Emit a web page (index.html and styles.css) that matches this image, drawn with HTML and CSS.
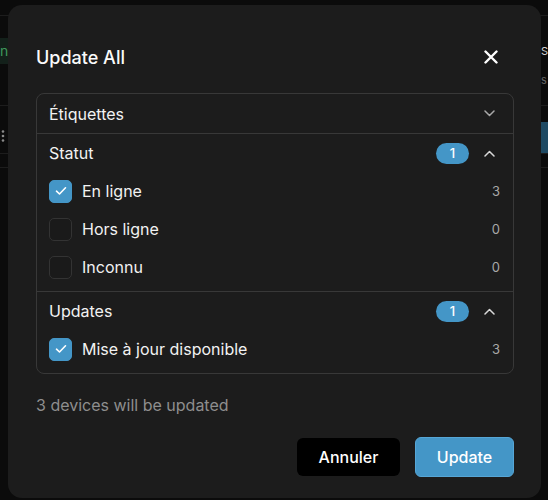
FILE: index.html
```html
<!DOCTYPE html>
<html lang="fr">
<head>
    <meta charset="UTF-8">
    <meta name="viewport" content="width=device-width, initial-scale=1.0">
    <title>Update All</title>
    <link rel="stylesheet" href="styles.css">
</head>
<body>

<!-- device table behind the dialog -->
<div class="backdrop">
    <div class="bg-row bg-row-top"></div>
    <div class="bg-row bg-row-device">
        <span class="bg-status">ne</span>
        <div class="bg-right">
            <span class="bg-name">S</span>
            <span class="bg-sub">s</span>
        </div>
    </div>
    <div class="bg-row bg-row-actions">
        <svg class="bg-kebab" width="4" height="12" viewBox="0 0 4 12">
            <circle cx="2" cy="1.5" r="1.3" fill="#8a8a8a"/>
            <circle cx="2" cy="6" r="1.3" fill="#8a8a8a"/>
            <circle cx="2" cy="10.5" r="1.3" fill="#8a8a8a"/>
        </svg>
        <span class="bg-btn"></span>
    </div>
    <div class="bg-row bg-row-thin"></div>
    <div class="bg-row bg-row-rest"></div>
</div>

<div class="modal">
    <div class="modal-header">
        <h2>Update All</h2>
        <button class="close-btn" type="button" aria-label="Fermer">
            <svg width="14" height="14" viewBox="0 0 14 14">
                <path d="M1.5 1.5 L12.5 12.5 M12.5 1.5 L1.5 12.5" stroke="#fff" stroke-width="2.4" stroke-linecap="round"/>
            </svg>
        </button>
    </div>

    <div class="filter-card">
        <div class="filter-section">
            <div class="section-head section-head-closed">
                <span class="section-title">Étiquettes</span>
                <span class="chevron">
                    <svg width="11" height="7" viewBox="0 0 11 7"><path d="M1 1 L5.5 5.5 L10 1" fill="none" stroke="#a8a8a8" stroke-width="1.5" stroke-linecap="round" stroke-linejoin="round"/></svg>
                </span>
            </div>
        </div>

        <div class="filter-section">
            <div class="section-head">
                <span class="section-title">Statut</span>
                <span class="badge">1</span>
                <span class="chevron">
                    <svg width="11" height="7" viewBox="0 0 11 7"><path d="M1 6 L5.5 1.5 L10 6" fill="none" stroke="#d8d8d8" stroke-width="1.5" stroke-linecap="round" stroke-linejoin="round"/></svg>
                </span>
            </div>
            <label class="option">
                <span class="check check-on">
                    <svg width="12" height="10" viewBox="0 0 12 10"><path d="M1.5 5.2 L4.5 8 L10.5 1.8" fill="none" stroke="#fff" stroke-width="1.6" stroke-linecap="round" stroke-linejoin="round"/></svg>
                </span>
                <span class="option-label">En ligne</span>
                <span class="option-count">3</span>
            </label>
            <label class="option">
                <span class="check"></span>
                <span class="option-label">Hors ligne</span>
                <span class="option-count">0</span>
            </label>
            <label class="option">
                <span class="check"></span>
                <span class="option-label">Inconnu</span>
                <span class="option-count">0</span>
            </label>
        </div>

        <div class="filter-section">
            <div class="section-head">
                <span class="section-title">Updates</span>
                <span class="badge">1</span>
                <span class="chevron">
                    <svg width="11" height="7" viewBox="0 0 11 7"><path d="M1 6 L5.5 1.5 L10 6" fill="none" stroke="#d8d8d8" stroke-width="1.5" stroke-linecap="round" stroke-linejoin="round"/></svg>
                </span>
            </div>
            <label class="option">
                <span class="check check-on">
                    <svg width="12" height="10" viewBox="0 0 12 10"><path d="M1.5 5.2 L4.5 8 L10.5 1.8" fill="none" stroke="#fff" stroke-width="1.6" stroke-linecap="round" stroke-linejoin="round"/></svg>
                </span>
                <span class="option-label">Mise à jour disponible</span>
                <span class="option-count">3</span>
            </label>
        </div>
    </div>

    <p class="summary">3 devices will be updated</p>

    <div class="modal-actions">
        <button type="button" class="btn btn-cancel">Annuler</button>
        <button type="button" class="btn btn-update">Update</button>
    </div>
</div>

</body>
</html>
```

FILE: styles.css
```css
/* Dark dialog over the device list */
body {
    margin: 0;
    height: 100vh;
    overflow: hidden;
    background-color: #0b0b0b;
    font-family: Inter, "Noto Sans", sans-serif;
    color: #f2f2f2;
}

/* list behind the dialog */
.backdrop {
    display: flex;
    flex-direction: column;
}
.bg-row {
    display: flex;
    justify-content: space-between;
    border-bottom: 1px solid #1d1d1d;
}
.bg-row-top {
    height: 15px;
}
.bg-row-device {
    height: 89px;
}
.bg-status {
    align-self: flex-start;
    margin-top: 22px;
    height: 26px;
    line-height: 26px;
    padding-right: 12px;
    background: #13201a;
    color: #3f9a5c;
    font-size: 14px;
}
.bg-right {
    display: flex;
    flex-direction: column;
    padding-top: 27px;
    width: 7px;
}
.bg-name {
    font-size: 11px;
    color: #d0d0d0;
    line-height: 16px;
}
.bg-sub {
    margin-top: 13px;
    font-size: 11px;
    color: #666;
    line-height: 16px;
}
.bg-row-actions {
    height: 47px;
    align-items: center;
}
.bg-kebab {
    margin-left: 1px;
    margin-top: 12px;
}
.bg-btn {
    align-self: flex-end;
    width: 7px;
    height: 31px;
    background: #1f4a63;
}
.bg-row-thin {
    height: 13px;
}
.bg-row-rest {
    flex: 1;
    border-bottom: none;
}

/* dialog */
.modal {
    position: absolute;
    left: 8px;
    top: 5px;
    width: 533px;
    height: 493px;
    box-sizing: border-box;
    padding: 37px 27px 0 28px;
    background: #1c1c1c;
    border-radius: 14px;
}
.modal-header {
    display: flex;
    align-items: center;
    justify-content: space-between;
    height: 30px;
    margin-bottom: 21px;
}
.modal-header h2 {
    margin: 0;
    font-size: 18px;
    font-weight: 500;
    color: #fafafa;
}
.close-btn {
    display: flex;
    align-items: center;
    justify-content: center;
    width: 24px;
    height: 24px;
    margin-right: 11px;
    padding: 0;
    border: none;
    background: none;
    cursor: pointer;
}

/* filter groups */
.filter-card {
    border: 1px solid #383838;
    border-radius: 8px;
}
.filter-section {
    padding-bottom: 5px;
}
.filter-section + .filter-section {
    border-top: 1px solid #383838;
}
.filter-section:first-child {
    padding-bottom: 0;
}
.section-head {
    display: flex;
    align-items: center;
    height: 38px;
    padding: 0 14px 0 12px;
}
.section-head-closed {
    height: 39px;
}
.section-title {
    flex: 1;
    font-size: 16px;
    font-weight: 400;
}
.badge {
    width: 33px;
    height: 21px;
    line-height: 21px;
    border-radius: 11px;
    background: #4496c7;
    color: #fff;
    font-size: 13px;
    font-weight: 500;
    text-align: center;
    margin-right: 10px;
}
.chevron {
    display: flex;
    align-items: center;
    justify-content: center;
    width: 20px;
    height: 20px;
}
.option {
    display: flex;
    align-items: center;
    height: 38px;
    padding: 0 13px 0 12px;
    cursor: pointer;
}
.check {
    display: flex;
    align-items: center;
    justify-content: center;
    box-sizing: border-box;
    width: 23px;
    height: 23px;
    border: 1px solid #333;
    border-radius: 5px;
    background: #1a1a1a;
}
.check-on {
    border-color: #4496c7;
    background: #4496c7;
}
.option-label {
    flex: 1;
    margin-left: 10px;
    font-size: 16px;
}
.option-count {
    font-size: 13px;
    color: #a8a8a8;
}

.summary {
    margin: 21px 0 0;
    font-size: 16px;
    line-height: 20px;
    color: #8e8e8e;
}

.modal-actions {
    display: flex;
    justify-content: flex-end;
    align-items: center;
    gap: 15px;
    margin-top: 22px;
}
.btn {
    height: 40px;
    border-radius: 6px;
    font-family: inherit;
    font-size: 16px;
    font-weight: 500;
    color: #fff;
    cursor: pointer;
}
.btn-cancel {
    width: 103px;
    height: 38px;
    border: none;
    background: #000;
}
.btn-update {
    width: 99px;
    border: 1px solid #56a6d6;
    background: #4496c7;
}
```
